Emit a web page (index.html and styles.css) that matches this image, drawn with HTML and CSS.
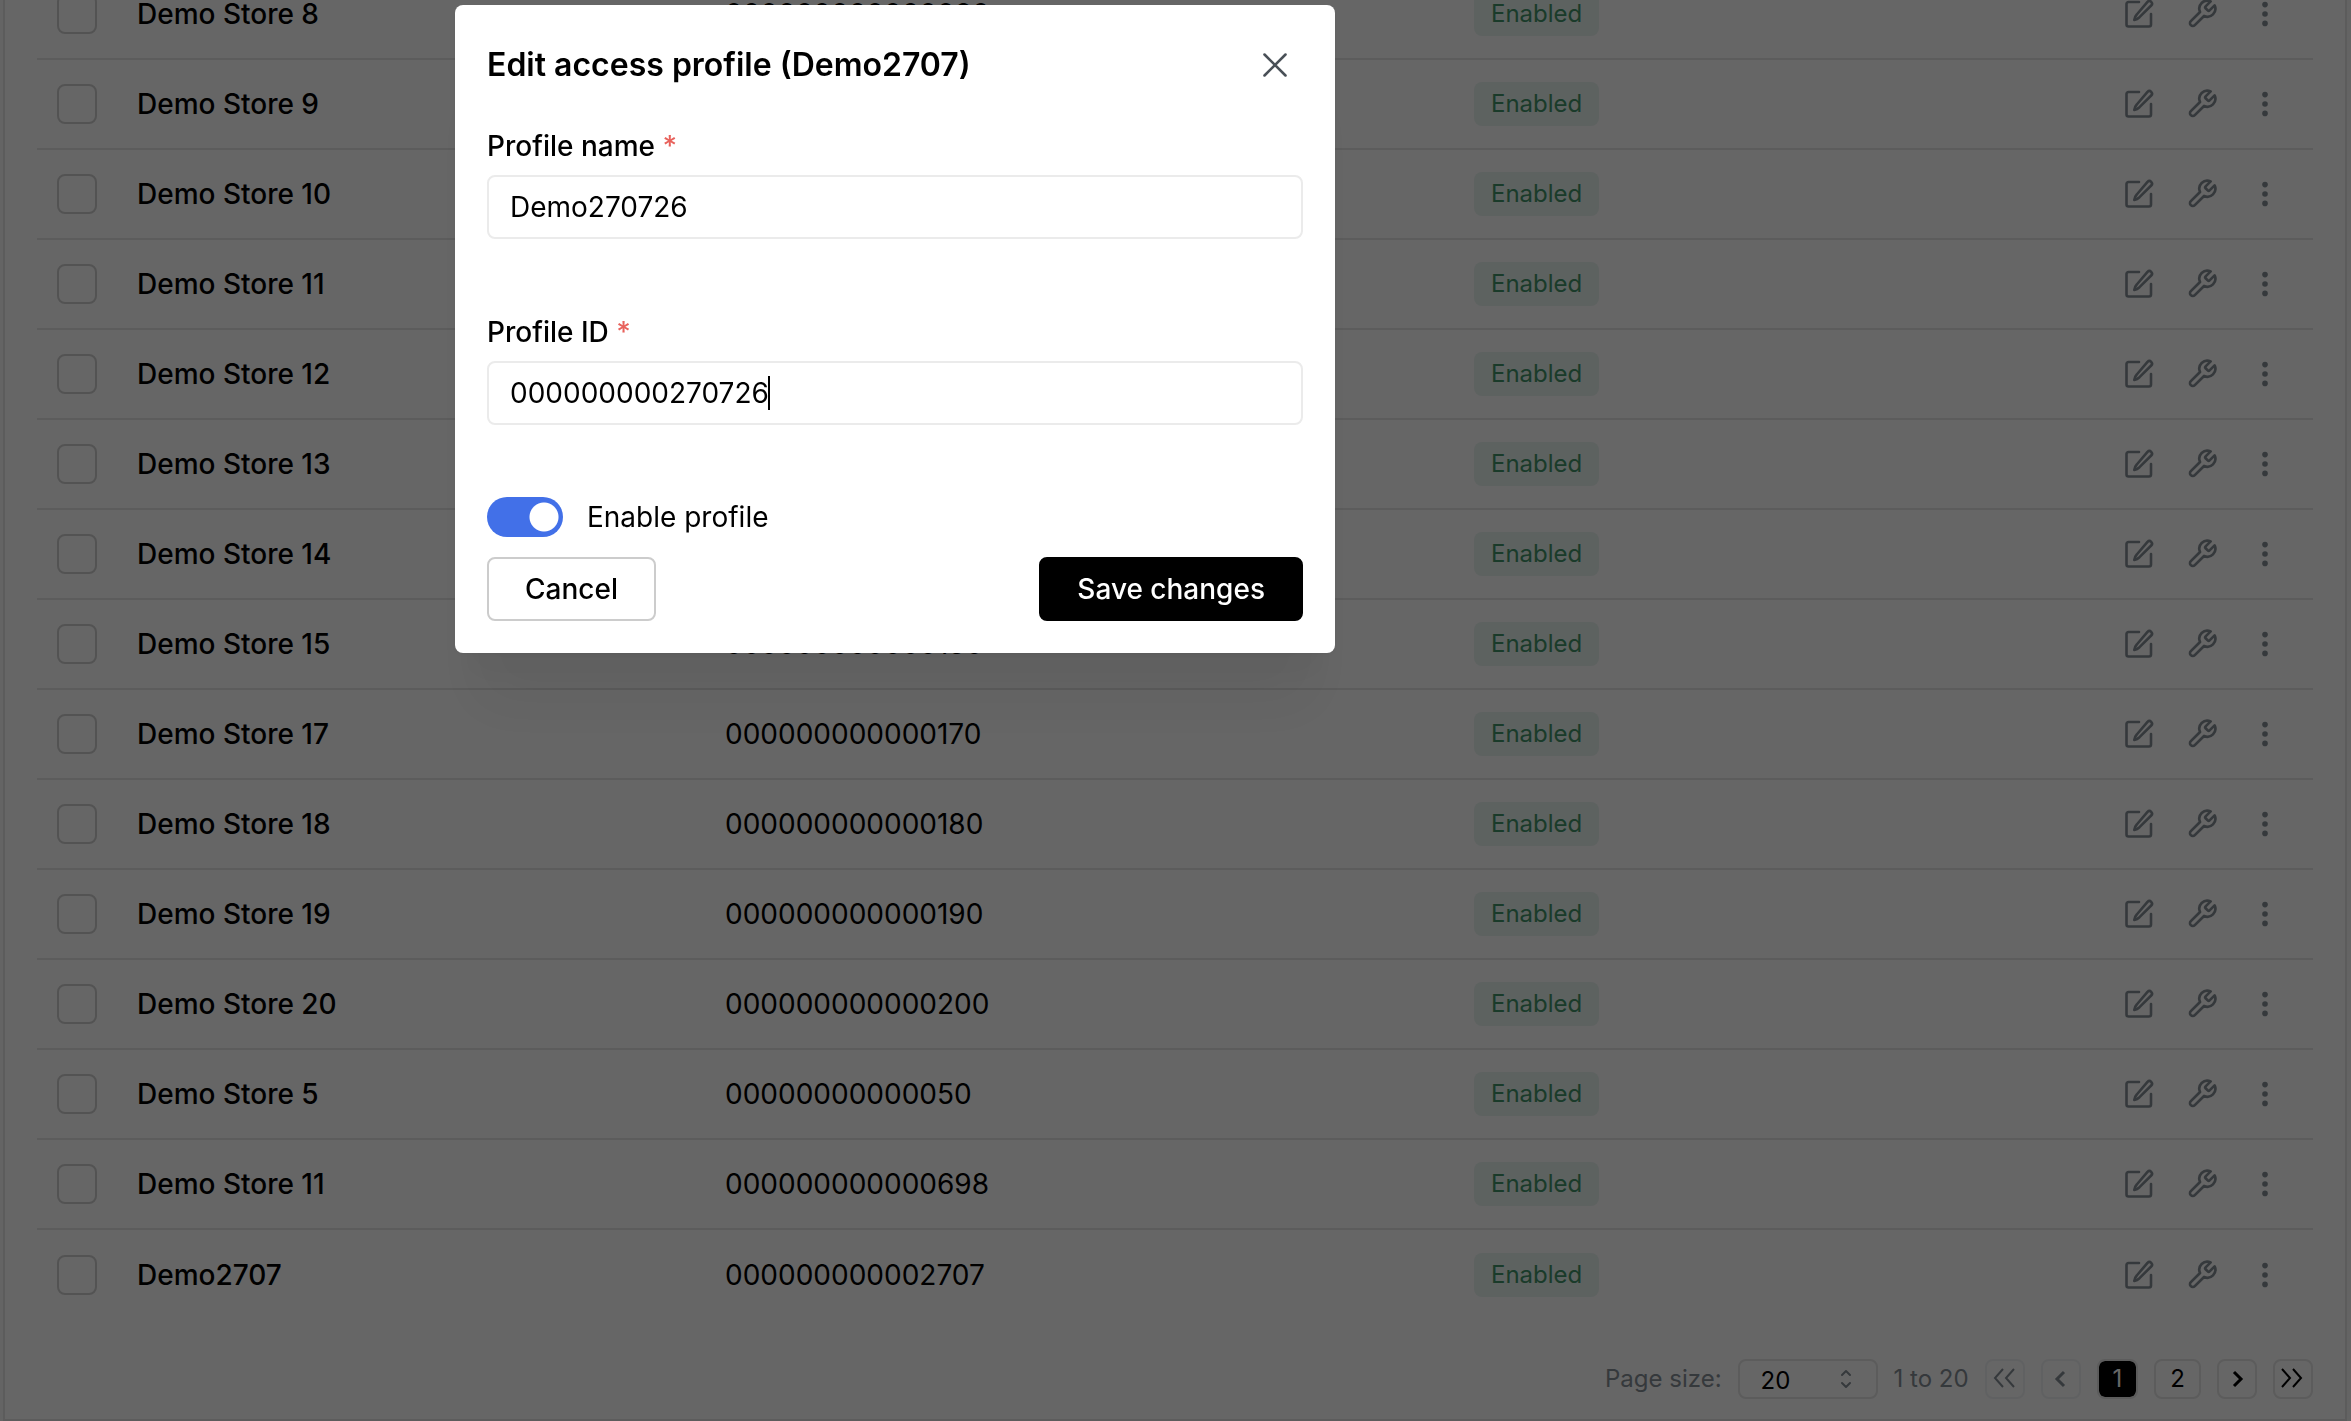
FILE: index.html
```html
<!DOCTYPE html>
<html lang="en">
<head>
<meta charset="utf-8">
<meta name="viewport" content="width=device-width, initial-scale=1">
<title>Access profiles</title>
<link rel="stylesheet" href="styles.css">
</head>
<body>
<svg class="sprite" aria-hidden="true">
  <symbol id="edit" viewBox="0 0 32 32"><path d="M16 4H5.500A2 2 0 0 0 3.500 6V26.500A2 2 0 0 0 5.500 28.500H26A2 2 0 0 0 28 26.500V16M24.500 3.800a2.600 2.600 0 0 1 3.700 3.700L16.500 19.200c-1.500 1.400-3.200 2.300-5.200 2.700 .3-2 1-3.900 2.500-5.400z"/></symbol>
  <symbol id="wrench" viewBox="0 0 24 24"><path d="M14.700 6.300a1 1 0 0 0 0 1.400l1.600 1.600a1 1 0 0 0 1.400 0l3.770-3.770a6 6 0 0 1-7.940 7.940l-6.910 6.910a2.120 2.120 0 0 1-3-3l6.910-6.910a6 6 0 0 1 7.940-7.940l-3.760 3.760z"/></symbol>
  <symbol id="dots" viewBox="0 0 32 32"><circle cx="16" cy="6.600" r="2.800"/><circle cx="16" cy="16" r="2.800"/><circle cx="16" cy="25.400" r="2.800"/></symbol>
</svg>

<main class="page">
  <section class="card">
    <table class="profiles">
      <colgroup><col class="col-check"><col class="col-name"><col class="col-id"><col class="col-status"><col></colgroup>
      <tbody id="rows"></tbody>
    </table>
    <nav class="pager" aria-label="Pagination">
      <label for="page-size">Page size:</label>
      <span class="size">
        <select id="page-size"><option>20</option><option>50</option></select>
        <svg viewBox="0 0 12 20"><path d="M2 6l4-4 4 4M2 14l4 4 4-4"/></svg>
      </span>
      <span class="range">1 to 20</span>
      <div class="pages">
        <button type="button" disabled aria-label="First page"><svg class="wide" viewBox="0 0 24 20"><path d="M10 0L2 9l8 9M21 0l-8 9 8 9"/></svg></button>
        <button type="button" disabled aria-label="Previous page"><svg viewBox="0 0 20 20"><path class="bold" d="M13 3L6 10l7 7"/></svg></button>
        <button type="button" class="num current" aria-current="page">1</button>
        <button type="button" class="num">2</button>
        <button type="button" aria-label="Next page"><svg viewBox="0 0 20 20"><path class="bold" d="M7 3l7 7-7 7"/></svg></button>
        <button type="button" aria-label="Last page"><svg class="wide" viewBox="0 0 24 20"><path d="M1 0l8 9-8 9M12 0l8 9-8 9"/></svg></button>
      </div>
    </nav>
  </section>
</main>

<div class="overlay">
  <form class="dialog" role="dialog" aria-modal="true" aria-labelledby="dialog-title">
    <header class="dialog-head">
      <h2 id="dialog-title">Edit access profile (Demo2707)</h2>
      <button type="button" class="close" aria-label="Close"><svg viewBox="0 0 24 24"><path d="M3 3l18 18M21 3L3 21"/></svg></button>
    </header>
    <div class="field">
      <label for="profile-name">Profile name <span class="req">*</span></label>
      <div class="box"><input id="profile-name" type="text" value="Demo270726"></div>
    </div>
    <div class="field">
      <label for="profile-id">Profile ID <span class="req">*</span></label>
      <div class="box"><input id="profile-id" type="text" value="000000000270726"><span class="caret"></span></div>
    </div>
    <label class="toggle"><input type="checkbox" role="switch" checked>Enable profile</label>
    <footer class="actions">
      <button type="button" class="btn">Cancel</button>
      <button type="submit" class="btn primary">Save changes</button>
    </footer>
  </form>
</div>
<script src="rows.js"></script>
</body>
</html>
```
FILE: styles.css
```css
* { box-sizing: border-box; }
body { margin: 0; background: #fff; color: #000; font-family: Inter, "Liberation Sans", sans-serif; font-size: 28px; }
button, input, select { font: inherit; color: inherit; }
button { cursor: pointer; }
svg { fill: none; stroke: currentColor; stroke-linecap: round; stroke-linejoin: round; }
.sprite { display: none; }

/* The list is scrolled to its end */
.page { height: 100vh; overflow: hidden; display: flex; flex-direction: column; justify-content: flex-end; padding: 0 4px 0 3px; background: #fafafa; }
.card { flex: none; padding: 0 32px 20px; background: #fff; border: 2px solid #e5e5e5; border-top: 0; }
.profiles { width: 100%; border-collapse: separate; border-spacing: 0; table-layout: fixed; }
.col-check { width: 80px; }
.col-name { width: 588px; }
.col-id { width: 749px; }
.col-status { width: 320px; }
.profiles td { height: 90px; padding: 0 20px; border-bottom: 2px solid #e5e5e5; vertical-align: middle; }
.profiles tr:last-child td { border-bottom: 0; }
.profiles .name { font-weight: 500; }
.check { display: block; appearance: none; width: 40px; height: 40px; margin: 0; border: 2px solid #d0d0d0; border-radius: 8px; }
.badge { display: block; width: max-content; padding: 0 17px; border-radius: 8px; background: #e9f4f1; color: #439369; font-size: 24px; line-height: 44px; }
.tools { display: flex; justify-content: flex-end; gap: 31px; padding-right: 12px; color: #868e96; }
.tools button { display: block; padding: 0; border: 0; background: none; color: inherit; }
.tools svg { display: block; width: 32px; height: 32px; stroke-width: 2.6; }
.tools .wrench { stroke-width: 2; }
.tools .dots { fill: currentColor; stroke: none; }

.pager { display: flex; justify-content: flex-end; align-items: center; gap: 16px; margin-top: 39px; color: #868e96; font-size: 24px; line-height: 40px; }
.size { position: relative; }
.size select { display: block; width: 140px; height: 40px; padding: 0 21px 2px; appearance: none; border: 2px solid #e5e5e5; border-radius: 8px; background: none; color: #000; }
.size svg { position: absolute; right: 26px; top: 10px; width: 12px; height: 20px; stroke-width: 2; pointer-events: none; }
.pages { display: flex; gap: 16px; color: #000; }
.pages button { display: grid; place-items: center; width: 40px; height: 40px; padding: 0; border: 2px solid #e5e5e5; border-radius: 8px; background: none; line-height: 36px; }
.pages svg { width: 20px; height: 20px; stroke-width: 2; stroke-linecap: butt; stroke-linejoin: miter; overflow: visible; }
.pages .wide { width: 24px; }
.pages .bold { stroke-width: 3; }
.pages button:disabled { border-color: #f1f3f5; color: #868e96; }
.pages .num { width: auto; padding: 0 14px; }
.pages .current { background: #000 padding-box; color: #fff; }

.overlay { position: fixed; inset: 0; padding: 5px 16px 0 455px; background: rgba(0, 0, 0, 0.6); }
.dialog { max-width: 880px; padding: 32px; border-radius: 8px; background: #fff; box-shadow: 0 2px 6px rgba(0, 0, 0, 0.05), 0 72px 56px -14px rgba(0, 0, 0, 0.05), 0 34px 34px -14px rgba(0, 0, 0, 0.04); }
.dialog-head { display: flex; justify-content: space-between; align-items: center; margin-bottom: 32px; }
.dialog-head h2 { margin: 0; font-size: 32px; line-height: 56px; font-weight: 600; }
.close { display: grid; place-items: center; width: 56px; height: 56px; padding: 0; border: 0; background: none; color: #495057; }
.close svg { width: 28px; height: 28px; stroke-width: 2.2; }
.field { margin-bottom: 72px; }
.field label { display: block; margin-bottom: 8px; line-height: 42px; font-weight: 500; }
.req { color: #e8625c; }
.box { position: relative; }
.box input { display: block; width: 100%; height: 64px; padding: 0 21px; border: 2px solid #ebebeb; border-radius: 8px; background: #fff; outline: 0; }
.caret { position: absolute; left: 281px; top: 15px; width: 2px; height: 34px; background: #000; }
.toggle { display: flex; align-items: center; gap: 24px; margin-bottom: 20px; line-height: 40px; }
.toggle input { appearance: none; width: 76px; height: 40px; margin: 0; border-radius: 20px; background: radial-gradient(circle at 57px 20px, #fff 0 14px, #4270e8 15px); }
.actions { display: flex; justify-content: space-between; }
.btn { height: 64px; padding: 0 36px; border: 2px solid #ccc; border-radius: 8px; background: #fff; font-weight: 500; }
.primary { border-color: #000; background: #000; color: #fff; }
```
FILE: rows.js
```js
const profiles = [
  ["Demo Store 8", "000000000000080"],
  ["Demo Store 9", "000000000000090"],
  ["Demo Store 10", "000000000000100"],
  ["Demo Store 11", "000000000000110"],
  ["Demo Store 12", "000000000000120"],
  ["Demo Store 13", "000000000000130"],
  ["Demo Store 14", "000000000000140"],
  ["Demo Store 15", "000000000000150"],
  ["Demo Store 17", "000000000000170"],
  ["Demo Store 18", "000000000000180"],
  ["Demo Store 19", "000000000000190"],
  ["Demo Store 20", "000000000000200"],
  ["Demo Store 5", "00000000000050"],
  ["Demo Store 11", "000000000000698"],
  ["Demo2707", "000000000002707"],
];

document.getElementById("rows").innerHTML = profiles.map(([name, id]) => `
  <tr>
    <td><input class="check" type="checkbox" aria-label="Select ${name}"></td>
    <td class="name">${name}</td>
    <td>${id}</td>
    <td><span class="badge">Enabled</span></td>
    <td><div class="tools">
      <button type="button" aria-label="Edit"><svg><use href="#edit"/></svg></button>
      <button type="button" aria-label="Settings"><svg class="wrench"><use href="#wrench"/></svg></button>
      <button type="button" aria-label="More"><svg class="dots"><use href="#dots"/></svg></button>
    </div></td>
  </tr>`).join("");
```
